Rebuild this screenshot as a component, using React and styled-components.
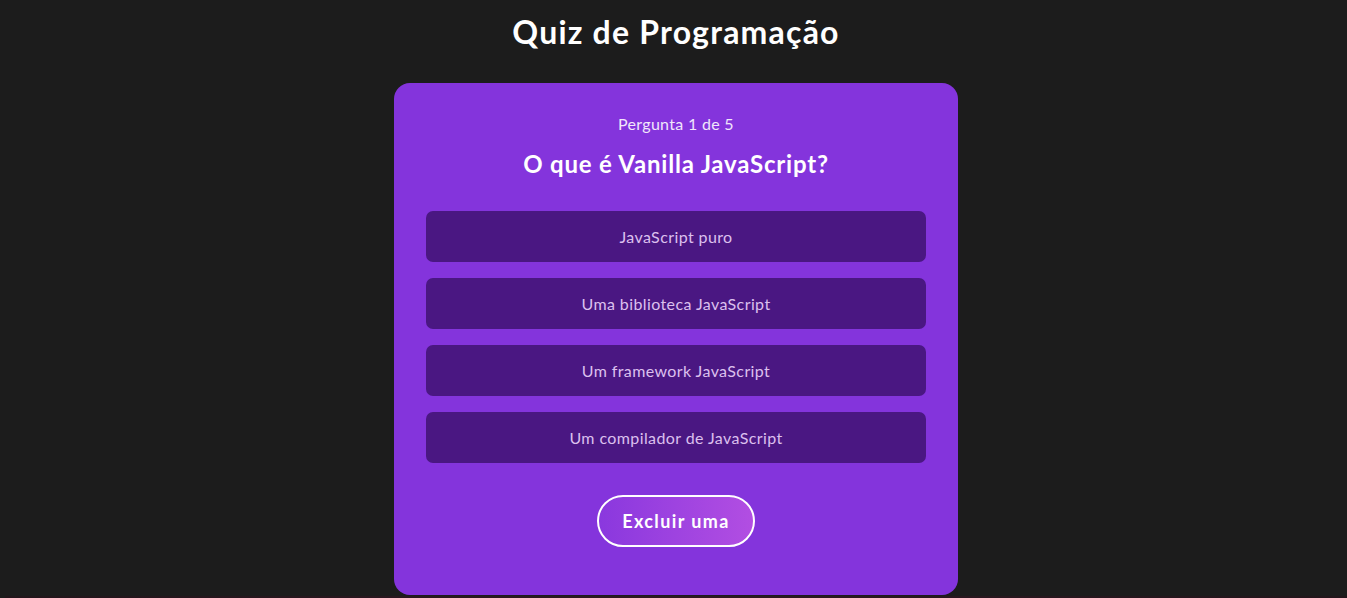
import React from "react";
import styled, { createGlobalStyle } from "styled-components";

const Global = createGlobalStyle`
  html, body { margin: 0; padding: 0; }
  body {
    background: #1c1c1c;
    font-family: Lato, "Noto Sans", "Liberation Sans", sans-serif;
    color: #fff;
  }
`;

const Page = styled.div`
  display: flex;
  flex-direction: column;
  align-items: center;
  min-height: 598px;
  padding-left: 5px;
  box-sizing: border-box;
`;

const Title = styled.h1`
  margin: 12px 0 0;
  height: 40px;
  line-height: 40px;
  font-size: 32px;
  font-weight: 700;
  letter-spacing: 1.2px;
  color: #ffffff;
`;

const Card = styled.main`
  margin-top: 31px;
  width: 564px;
  box-sizing: border-box;
  padding: 30px 32px 48px;
  background: #8434dc;
  border-radius: 16px;
  display: flex;
  flex-direction: column;
  align-items: center;
`;

const Counter = styled.p`
  margin: 0;
  font-size: 16px;
  line-height: 22px;
  color: #f1e6fb;
  font-weight: 400;
  letter-spacing: 0.3px;
`;

const Question = styled.h2`
  margin: 15px 0 0;
  font-size: 24px;
  line-height: 28px;
  font-weight: 700;
  letter-spacing: 0.8px;
  color: #ffffff;
`;

const Options = styled.div`
  margin-top: 33px;
  width: 100%;
  display: flex;
  flex-direction: column;
  gap: 16px;
`;

const Option = styled.button`
  height: 51px;
  width: 100%;
  border: none;
  border-radius: 7px;
  background: #4a1782;
  color: #dcc0ee;
  font-family: inherit;
  font-size: 16px;
  letter-spacing: 0.4px;
  cursor: pointer;
`;

const Action = styled.button`
  margin-top: 32px;
  height: 52px;
  padding: 0 23px;
  border: 2px solid #ffffff;
  border-radius: 26px;
  background: linear-gradient(90deg, #8a38de 0%, #b24ee2 100%);
  color: #ffffff;
  font-family: inherit;
  font-size: 18px;
  font-weight: 700;
  letter-spacing: 1.4px;
  cursor: pointer;
`;

const Footer = styled.div`
  margin-top: 1px;
  width: 100%;
  height: 20px;
  background: linear-gradient(90deg, #22161b, #2e1822 50%, #22161b);
`;

const options = [
  "JavaScript puro",
  "Uma biblioteca JavaScript",
  "Um framework JavaScript",
  "Um compilador de JavaScript",
];

export default function App() {
  return (
    <>
      <Global />
      <Page>
        <Title>Quiz de Programação</Title>
        <Card>
          <Counter>Pergunta 1 de 5</Counter>
          <Question>O que é Vanilla JavaScript?</Question>
          <Options>
            {options.map((o) => (
              <Option key={o}>{o}</Option>
            ))}
          </Options>
          <Action>Excluir uma</Action>
        </Card>
        <Footer />
      </Page>
    </>
  );
}
